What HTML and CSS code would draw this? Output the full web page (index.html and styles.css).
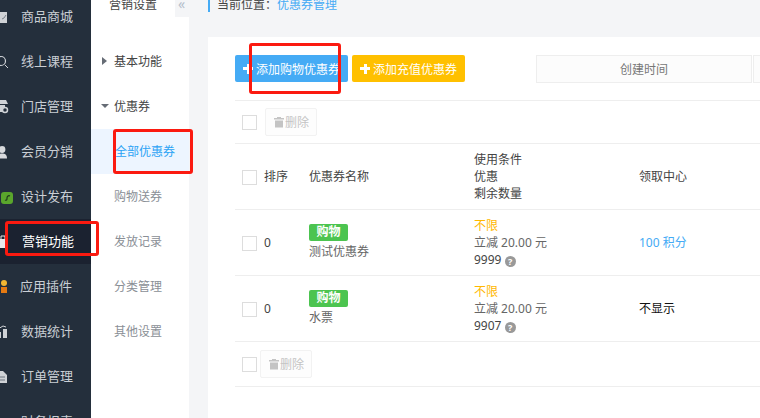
FILE: index.html
```html
<!DOCTYPE html>
<html lang="zh-CN">
<head>
<meta charset="utf-8">
<title>优惠券管理</title>
<link rel="stylesheet" href="styles.css">
</head>
<body>
<div class="app">
  <nav class="side">
    <ul class="side-list">
      <li class="side-item"><svg class="side-icon" viewBox="0 0 20 20"><rect x="-3" y="5" width="10" height="11" fill="#cfd2d6"/><path d="M2 12l2-1 2-3" stroke="#78808a" fill="none"/></svg>商品商城</li>
      <li class="side-item"><svg class="side-icon" viewBox="0 0 20 20"><circle cx="1" cy="9" r="4.500" stroke="#cfd2d6" stroke-width="1.200" fill="none"/><path d="M5 13l3 3" stroke="#cfd2d6" fill="none"/></svg>线上课程</li>
      <li class="side-item"><svg class="side-icon" viewBox="0 0 20 20"><path d="M-2 3h8l2 4H-2z" fill="#cfd2d6"/><rect x="-2" y="8" width="7" height="7" fill="#cfd2d6"/><circle cx="5" cy="13" r="2.500" fill="#242f3c" stroke="#cfd2d6" stroke-width="1.500"/></svg>门店管理</li>
      <li class="side-item"><svg class="side-icon" viewBox="0 0 20 20"><circle cx="2" cy="7.500" r="3.400" fill="#d8dadd"/><path d="M-4 16.500c0-4 3-5 6-5s5 1 5 5z" fill="#d8dadd"/></svg>会员分销</li>
      <li class="side-item"><svg class="side-icon" viewBox="0 0 20 20"><rect x="1" y="5" width="12" height="12" rx="3" fill="#5aa62c"/><path d="M5 13c2 1 2-1 2-2s1-3 3-2" stroke="#1f3a1c" stroke-width="1.200" fill="none"/></svg>设计发布</li>
      <li class="side-item side-item-active"><svg class="side-icon" viewBox="0 0 20 20"><path d="M-3 7h9v9h-9z" fill="#e8e9eb"/><path d="M1 7V4h4v3" fill="none" stroke="#e8e9eb"/></svg>营销功能</li>
      <li class="side-item side-item-tight"><svg class="side-icon" viewBox="0 0 20 20"><circle cx="4" cy="6" r="3" fill="#f2b632"/><rect x="1" y="10" width="6" height="6" fill="#e57a12"/></svg>应用插件</li>
      <li class="side-item"><svg class="side-icon" viewBox="0 0 20 20"><path d="M-3 10h4v6h-4zM3 7h4v9H3z" fill="#cfd2d6"/><path d="M-2 7l5-3 3 1" stroke="#cfd2d6" fill="none"/></svg>数据统计</li>
      <li class="side-item"><svg class="side-icon" viewBox="0 0 20 20"><path d="M-3 4h6l4 4v8h-10z" fill="#cfd2d6"/><path d="M-1 10h6M-1 13h6" stroke="#6c747e"/></svg>订单管理</li>
      <li class="side-item">财务报表</li>
    </ul>
  </nav>

  <aside class="sub">
    <div class="sub-top">
      <div class="sub-title">营销设置</div>
      <div class="sub-fold">«</div>
    </div>
    <ul class="sub-list">
      <li class="sub-item sub-parent"><span class="tri tri-right"></span>基本功能</li>
      <li class="sub-item sub-parent"><span class="tri tri-down"></span>优惠券</li>
      <li class="sub-item sub-active">全部优惠券</li>
      <li class="sub-item">购物送券</li>
      <li class="sub-item">发放记录</li>
      <li class="sub-item">分类管理</li>
      <li class="sub-item">其他设置</li>
    </ul>
  </aside>

  <main class="main">
    <div class="crumb">当前位置：<span class="crumb-link">优惠券管理</span></div>
    <section class="card">
      <div class="toolbar">
        <button class="btn btn-blue"><span class="plus"></span>添加购物优惠券</button>
        <button class="btn btn-yellow"><span class="plus"></span>添加充值优惠券</button>
        <div class="filters">
          <div class="filter">创建时间</div>
          <div class="filter filter-next"></div>
        </div>
      </div>
      <div class="bulk">
        <span class="check"></span>
        <button class="del del-top"><svg class="trash" viewBox="0 0 12 12"><path d="M4 2V1h4v1h3v1.500H1V2zM2 4.500h8V11.500H2z" fill="#c4c4c4"/></svg>删除</button>
      </div>
      <table class="grid">
        <colgroup>
          <col class="c-check"><col class="c-sort"><col class="c-name"><col class="c-cond"><col class="c-center">
        </colgroup>
        <tr class="row">
          <td class="cell-check"><span class="check"></span></td>
          <td>排序</td>
          <td>优惠券名称</td>
          <td>使用条件<br>优惠<br>剩余数量</td>
          <td>领取中心</td>
        </tr>
        <tr class="row">
          <td class="cell-check"><span class="check"></span></td>
          <td>0</td>
          <td class="cell-name"><span class="badge">购物</span><div class="name">测试优惠券</div></td>
          <td><span class="limit">不限</span><br><span class="muted">立减 20.00 元</span><br>9999 <span class="help">?</span></td>
          <td class="link">100 积分</td>
        </tr>
        <tr class="row">
          <td class="cell-check"><span class="check"></span></td>
          <td>0</td>
          <td class="cell-name"><span class="badge">购物</span><div class="name">水票</div></td>
          <td><span class="limit">不限</span><br><span class="muted">立减 20.00 元</span><br>9907 <span class="help">?</span></td>
          <td class="black">不显示</td>
        </tr>
      </table>
      <div class="bulk bulk-foot">
        <span class="check"></span>
        <button class="del"><svg class="trash" viewBox="0 0 12 12"><path d="M4 2V1h4v1h3v1.500H1V2zM2 4.500h8V11.500H2z" fill="#c4c4c4"/></svg>删除</button>
      </div>
    </section>
  </main>

  <div class="mark mark-add"></div>
  <div class="mark mark-all"></div>
  <div class="mark mark-side"></div>
</div>
</body>
</html>
```

FILE: styles.css
```css
* { box-sizing: border-box; }
html, body { margin: 0; padding: 0; }
body {
  width: 760px;
  height: 418px;
  overflow: hidden;
  font-family: "Noto Sans", "Noto Sans CJK SC", sans-serif;
  font-size: 12px;
  color: #444;
  background: #f4f5f7;
}
ul { list-style: none; margin: 0; padding: 0; }
button { font-family: inherit; font-size: 12px; margin: 0; cursor: pointer; }

.app {
  position: relative;
  display: flex;
  width: 760px;
  height: 418px;
  overflow: hidden;
}

/* dark rail */
.side { flex: 0 0 91px; background: #242f3c; overflow: hidden; }
.side-list { margin-top: -6px; }
.side-item {
  position: relative;
  height: 45px;
  line-height: 45px;
  padding-left: 21px;
  font-size: 13px;
  color: #c9ced4;
  white-space: nowrap;
}
.side-item-active { background: #1b2230; color: #fff; padding-left: 22px; }
.side-item-tight { padding-left: 20px; }
.side-icon {
  position: absolute;
  left: 0;
  top: 13px;
  width: 20px;
  height: 20px;
  overflow: visible;
}

/* secondary menu */
.sub { flex: 0 0 98px; background: #fff; }
.sub-top { display: flex; height: 17px; }
.sub-title {
  width: 84px;
  padding-left: 18px;
  line-height: 10px;
  color: #444;
}
.sub-fold {
  width: 14px;
  background: #f4f5f7;
  color: #b5c0cc;
  font-size: 14px;
  line-height: 8px;
  padding-left: 3px;
}
.sub-list { margin-top: 22px; }
.sub-item {
  height: 45px;
  line-height: 45px;
  padding-left: 23px;
  color: #8a8f96;
}
.sub-parent { color: #444; position: relative; }
.sub-active { background: #edf5ff; color: #2ba3f5; padding-left: 24px; }
.tri { position: absolute; width: 0; height: 0; border-style: solid; border-color: transparent; }
.tri-right { left: 11px; top: 18px; border-width: 4px 0 4px 5px; border-left-color: #666c75; }
.tri-down { left: 10px; top: 20px; border-width: 4px 4px 0 4px; border-top-color: #666c75; }

/* content */
.main { flex: 1; display: flex; flex-direction: column; padding-left: 19px; min-width: 0; }
.crumb {
  flex: 0 0 12px;
  height: 12px;
  line-height: 10px;
  border-left: 2px solid #45abf5;
  padding-left: 7px;
  color: #444;
  white-space: nowrap;
}
.crumb-link { color: #45abf5; }
.card {
  flex: 1;
  margin-top: 25px;
  padding: 18px 0 0 27px;
  background: #fff;
}

.toolbar {
  display: flex;
  align-items: flex-start;
  height: 46px;
  border-bottom: 1px solid #eee;
}
.btn {
  display: flex;
  flex: 0 0 113px;
  align-items: center;
  height: 27px;
  padding: 0 0 0 8px;
  border: 0;
  border-radius: 2px;
  color: #fff;
  white-space: nowrap;
}
.btn-blue { background: #45abf5; margin-right: 4px; }
.btn-yellow { background: #ffc000; }
.plus {
  flex: 0 0 10px;
  width: 10px;
  height: 10px;
  margin-right: 3px;
  background:
    linear-gradient(#fff, #fff) center / 10px 3px no-repeat,
    linear-gradient(#fff, #fff) center / 3px 10px no-repeat;
}
.filters { display: flex; flex: 0 0 auto; margin-left: 71px; }
.filter {
  flex: 0 0 216px;
  height: 28px;
  line-height: 27px;
  border: 1px solid #eee;
  background: #fcfcfc;
  text-align: center;
  color: #777;
}
.filter-next { margin-left: 1px; flex-basis: 30px; }

.bulk {
  display: flex;
  align-items: center;
  height: 43px;
  padding-left: 7px;
  border-bottom: 1px solid #eee;
}
.check {
  display: inline-block;
  flex: 0 0 15px;
  width: 15px;
  height: 15px;
  border: 1px solid #ddd;
  background: #fff;
  vertical-align: middle;
}
.del {
  display: flex;
  align-items: center;
  justify-content: center;
  width: 52px;
  height: 28px;
  margin-left: 3px;
  padding: 0;
  border: 1px solid #f2f2f2;
  border-radius: 2px;
  background: #fdfdfd;
  color: #c4c4c4;
}
.del-top { margin-left: 8px; }
.trash { width: 12px; height: 12px; margin-right: 0; }
.bulk-foot { height: 45px; }

.grid {
  width: 525px;
  border-collapse: separate;
  border-spacing: 0;
  table-layout: fixed;
  line-height: 17px;
}
.c-check { width: 29px; }
.c-sort { width: 45px; }
.c-name { width: 165px; }
.c-cond { width: 165px; }
.c-center { width: 121px; }
.row td {
  height: 66px;
  padding: 0;
  border-bottom: 1px solid #eee;
  vertical-align: middle;
  white-space: nowrap;
}
.row .cell-check { padding-left: 7px; }
.row .cell-name { padding-top: 2px; }
.badge {
  display: block;
  width: 39px;
  height: 17px;
  line-height: 16px;
  border-radius: 2px;
  background: #4cc450;
  color: #fff;
  font-weight: 700;
  text-align: center;
}
.name { color: #666; line-height: 22px; }
.limit { color: #ffb800; }
.muted { color: #666; }
.link { color: #45abf5; }
.black { color: #111; }
.help {
  display: inline-block;
  width: 11px;
  height: 11px;
  border-radius: 50%;
  background: #999;
  color: #fff;
  font-size: 9px;
  font-weight: 700;
  line-height: 11px;
  text-align: center;
  vertical-align: -1px;
}

/* red annotation boxes drawn over the page */
.mark {
  position: absolute;
  border: 3px solid #fb1a10;
  border-radius: 3px;
  pointer-events: none;
}
.mark-add { left: 249px; top: 43px; width: 92px; height: 51px; }
.mark-all { left: 113px; top: 129px; width: 80px; height: 45px; }
.mark-side { left: 5px; top: 221px; width: 94px; height: 35px; }
```
